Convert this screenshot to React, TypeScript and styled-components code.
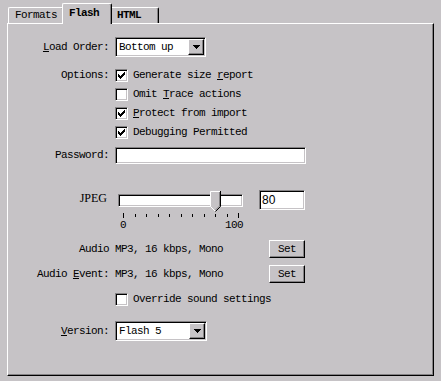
import styled, { createGlobalStyle } from 'styled-components';

const FACE = '#c6c3c6';
const SHADOW = '#848284';

const GlobalStyle = createGlobalStyle`
  html, body {
    margin: 0;
    padding: 0;
    background: ${FACE};
  }
  body {
    width: 441px;
    height: 381px;
    overflow: hidden;
    color: #000;
    font-family: 'Liberation Mono', 'DejaVu Sans Mono', monospace;
    font-size: 11px;
    letter-spacing: -0.6px;
    line-height: 13px;
  }
`;

const Window = styled.div`
  padding: 3px 0 0 7px;
`;

const TabStrip = styled.div`
  display: flex;
  align-items: flex-end;
  height: 20px;
  margin-left: 1px;
`;

const Tab = styled.div<{ $active?: boolean; $bold?: boolean; $width: number }>`
  box-sizing: border-box;
  display: flex;
  align-items: center;
  width: ${(p) => p.$width}px;
  height: ${(p) => (p.$active ? 21 : 16)}px;
  padding-left: 6px;
  padding-bottom: ${(p) => (p.$active ? 2 : 0)}px;
  margin: ${(p) => (p.$active ? '0 -2px -1px -2px' : '0')};
  position: ${(p) => (p.$active ? 'relative' : 'static')};
  z-index: ${(p) => (p.$active ? 1 : 0)};
  background: ${FACE};
  border-top: 1px solid #fff;
  border-left: 1px solid #fff;
  border-right: 1px solid #000;
  border-radius: 2px 2px 0 0;
  box-shadow: inset -1px 0 ${SHADOW};
  font-weight: ${(p) => (p.$bold ? 700 : 400)};
`;

const Panel = styled.div`
  box-sizing: border-box;
  width: 427px;
  height: 353px;
  padding-top: 13px;
  border-top: 1px solid #fff;
  border-left: 1px solid #fff;
  border-right: 1px solid #000;
  border-bottom: 1px solid #000;
  box-shadow: inset -1px -1px ${SHADOW};
  display: flex;
  flex-direction: column;
`;

const Row = styled.div<{ $top?: number; $height: number; $align?: string }>`
  display: grid;
  grid-template-columns: 101px 191px;
  column-gap: 6px;
  align-items: ${(p) => p.$align ?? 'center'};
  height: ${(p) => p.$height}px;
  margin-top: ${(p) => p.$top ?? 0}px;
`;

const Label = styled.div<{ $offset?: number }>`
  text-align: right;
  white-space: nowrap;
  margin-top: ${(p) => p.$offset ?? 0}px;
`;

const Key = styled.span`
  text-decoration: underline;
  text-underline-offset: 1px;
`;

const Sunken = styled.div<{ $width: number; $height: number }>`
  box-sizing: border-box;
  position: relative;
  width: ${(p) => p.$width}px;
  height: ${(p) => p.$height}px;
  background: #fff;
  border: 1px solid;
  border-color: ${SHADOW} #fff #fff ${SHADOW};
  box-shadow: inset 1px 1px #000, inset -1px -1px ${FACE};
`;

const SelectBox = styled(Sunken)`
  display: flex;
  align-items: center;
  padding-left: 3px;
`;

const SelectText = styled.span`
  flex: 1;
  white-space: nowrap;
`;

const DropButton = styled.span`
  box-sizing: border-box;
  width: 16px;
  height: 16px;
  margin-right: 1px;
  display: flex;
  align-items: center;
  justify-content: center;
  background: ${FACE};
  border-top: 1px solid #fff;
  border-left: 1px solid #fff;
  border-right: 1px solid #000;
  border-bottom: 1px solid #000;
  box-shadow: inset -1px -1px ${SHADOW};
`;

const CheckLine = styled.label`
  display: flex;
  align-items: center;
  gap: 5px;
  white-space: nowrap;
`;

const Box = styled.span`
  box-sizing: border-box;
  width: 13px;
  height: 13px;
  display: flex;
  align-items: center;
  justify-content: center;
  background: #fff;
  border: 1px solid;
  border-color: ${SHADOW} #fff #fff ${SHADOW};
  box-shadow: inset 1px 1px #000, inset -1px -1px ${FACE};
`;

const NumberField = styled(Sunken)`
  padding: 2px 0 0 2px;
  font-family: 'Liberation Sans', Arial, sans-serif;
  font-size: 12px;
  letter-spacing: 0;
  line-height: 14px;
`;

const SliderLine = styled.div`
  display: flex;
  align-items: flex-start;
  gap: 16px;
`;

const Slider = styled.div`
  position: relative;
  width: 125px;
  margin-left: 3px;
  padding-top: 4px;
`;

const Thumb = styled.svg`
  position: absolute;
  top: 1px;
`;

const Ticks = styled.div`
  display: flex;
  justify-content: space-between;
  align-items: flex-start;
  margin: 6px 4px 0 5px;
`;

const Tick = styled.span<{ $long?: boolean }>`
  width: 1px;
  height: ${(p) => (p.$long ? 5 : 3)}px;
  margin-top: ${(p) => (p.$long ? 0 : 1)}px;
  background: #000;
`;

const Scale = styled.div`
  display: flex;
  justify-content: space-between;
  margin: 1px 0 0 2px;
`;

const JpegLabel = styled(Label)`
  font-family: 'Liberation Serif', 'Times New Roman', serif;
  font-size: 12px;
  letter-spacing: 0;
  padding-right: 2px;
`;

const AudioLine = styled.div`
  display: flex;
  align-items: center;
  justify-content: space-between;
  white-space: nowrap;
`;

const Button = styled.button`
  box-sizing: border-box;
  width: 36px;
  height: 18px;
  padding: 0;
  margin-right: 1px;
  background: ${FACE};
  color: #000;
  font: inherit;
  letter-spacing: inherit;
  border-top: 1px solid #fff;
  border-left: 1px solid #fff;
  border-right: 1px solid #000;
  border-bottom: 1px solid #000;
  box-shadow: inset -1px -1px ${SHADOW};
`;

const CheckMark = () => (
  <svg width="7" height="7" viewBox="0 0 7 7" shapeRendering="crispEdges">
    <path
      fill="#000"
      d="M6 0h1v1h-1z M5 1h2v1h-2z M0 2h1v1h-1z M4 2h3v1h-3z M0 3h2v1h-2z M3 3h3v1h-3z M0 4h5v1h-5z M1 5h3v1h-3z M2 6h1v1h-1z"
    />
  </svg>
);

const DownArrow = () => (
  <svg width="7" height="4" viewBox="0 0 7 4" shapeRendering="crispEdges">
    <path fill="#000" d="M0 0h7v1H0z M1 1h5v1H1z M2 2h3v1H2z M3 3h1v1H3z" />
  </svg>
);

function Select({ value, width }: { value: string; width: number }) {
  return (
    <SelectBox $width={width} $height={20}>
      <SelectText>{value}</SelectText>
      <DropButton>
        <DownArrow />
      </DropButton>
    </SelectBox>
  );
}

function Check({ checked, children }: { checked?: boolean; children: React.ReactNode }) {
  return (
    <CheckLine>
      <Box>{checked && <CheckMark />}</Box>
      <span>{children}</span>
    </CheckLine>
  );
}

export default function App() {
  const quality = 80;
  const thumbLeft = Math.round((quality / 100) * 115);
  const ticks = Array.from({ length: 11 }, (_, i) => i);

  return (
    <>
      <GlobalStyle />
      <Window>
        <TabStrip>
          <Tab $width={56}>Formats</Tab>
          <Tab $width={50} $active $bold>
            Flash
          </Tab>
          <Tab $width={49} $bold>
            HTML
          </Tab>
        </TabStrip>
        <Panel>
          <Row $height={20}>
            <Label>
              <Key>L</Key>oad Order:
            </Label>
            <Select value="Bottom up" width={91} />
          </Row>

          <Row $top={9} $height={19}>
            <Label>Options:</Label>
            <Check checked>
              Generate size <Key>r</Key>eport
            </Check>
          </Row>
          <Row $height={19}>
            <span />
            <Check>
              Omit <Key>T</Key>race actions
            </Check>
          </Row>
          <Row $height={19}>
            <span />
            <Check checked>
              <Key>P</Key>rotect from import
            </Check>
          </Row>
          <Row $height={19}>
            <span />
            <Check checked>Debugging Permitted</Check>
          </Row>

          <Row $top={5} $height={17}>
            <Label>Password:</Label>
            <Sunken $width={191} $height={17} />
          </Row>

          <Row $top={26} $height={41} $align="start">
            <JpegLabel $offset={2}>JPEG</JpegLabel>
            <SliderLine>
              <Slider>
                <Sunken $width={125} $height={13} />
                <Thumb width="11" height="21" viewBox="0 0 11 21" style={{ left: thumbLeft }}>
                  <polygon points="0,0 11,0 11,15 5.5,21 0,15" fill={FACE} />
                  <path d="M0.5 15.5 V0.5 H10" stroke="#fff" fill="none" />
                  <path d="M0.5 15.5 L5 20" stroke="#fff" fill="none" />
                  <path d="M10.5 0 V15.5 L5.5 20.5" stroke="#000" fill="none" />
                  <path d="M9.5 1 V15 L5.5 19" stroke={SHADOW} fill="none" />
                </Thumb>
                <Ticks>
                  {ticks.map((t) => (
                    <Tick key={t} $long={t === 0 || t === 10} />
                  ))}
                </Ticks>
                <Scale>
                  <span>0</span>
                  <span>100</span>
                </Scale>
              </Slider>
              <NumberField $width={46} $height={20}>
                {quality}
              </NumberField>
            </SliderLine>
          </Row>

          <Row $top={9} $height={18}>
            <Label>Audio</Label>
            <AudioLine>
              <span>MP3, 16 kbps, Mono</span>
              <Button>Set</Button>
            </AudioLine>
          </Row>
          <Row $top={7} $height={18}>
            <Label>
              Audio <Key>E</Key>vent:
            </Label>
            <AudioLine>
              <span>MP3, 16 kbps, Mono</span>
              <Button>Set</Button>
            </AudioLine>
          </Row>

          <Row $top={7} $height={19}>
            <span />
            <Check>Override sound settings</Check>
          </Row>

          <Row $top={12} $height={20}>
            <Label>
              <Key>V</Key>ersion:
            </Label>
            <Select value="Flash 5" width={92} />
          </Row>
        </Panel>
      </Window>
    </>
  );
}
